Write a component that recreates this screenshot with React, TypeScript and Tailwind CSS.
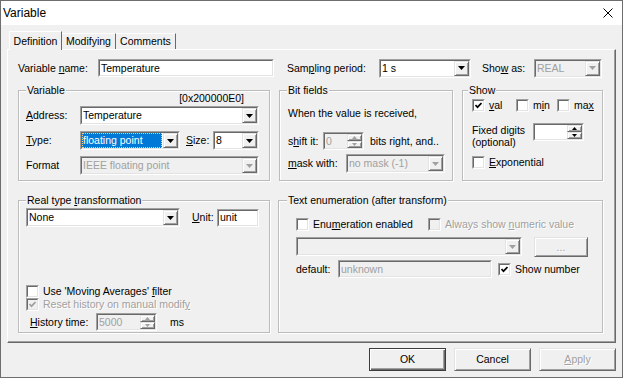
import React from "react";

const font = "font-['Liberation_Sans',Arial,sans-serif]";

// classic 3D edges
const sunkenOuter = "border border-t-[#a0a0a0] border-l-[#a0a0a0] border-r-white border-b-white";
const sunkenInner = "border border-t-[#696969] border-l-[#696969] border-r-[#e3e3e3] border-b-[#e3e3e3]";
const raised =
  "border border-t-[#e3e3e3] border-l-[#e3e3e3] border-r-[#696969] border-b-[#696969] shadow-[inset_1px_1px_0_#fff,inset_-1px_-1px_0_#a0a0a0]";
const grayText = "text-[#a0a0a0] [text-shadow:1px_1px_0_#fff]";

const U = ({ children }: { children: React.ReactNode }) => <span className="underline">{children}</span>;

const Arrow = ({ gray }: { gray?: boolean }) => (
  <svg width="7" height="4" viewBox="0 0 7 4">
    <polygon points="0,0 7,0 3.5,4" fill={gray ? "#a0a0a0" : "#000"} />
  </svg>
);

const SmallArrow = ({ up, gray }: { up?: boolean; gray?: boolean }) => (
  <svg width="5" height="3" viewBox="0 0 5 3">
    <polygon points={up ? "0,3 5,3 2.5,0" : "0,0 5,0 2.5,3"} fill={gray ? "#a0a0a0" : "#000"} />
  </svg>
);

const Combo = ({
  className,
  value,
  disabled,
  selected,
}: {
  className: string;
  value?: string;
  disabled?: boolean;
  selected?: boolean;
}) => (
  <div className={`flex h-[19px] shrink-0 ${sunkenOuter} ${disabled ? "bg-[#f0f0f0]" : "bg-white"} ${className}`}>
    <div className={`flex min-w-0 flex-1 ${sunkenInner}`}>
      <div className="flex min-w-0 flex-1 items-center">
        {selected ? (
          <span className="mr-[1px] flex h-full flex-1 items-center bg-[#0078d7] pl-[1px] text-white outline-1 outline-dotted outline-offset-[-1px] outline-[#ffd27a]">
            {value}
          </span>
        ) : (
          <span className={`pl-[1px] ${disabled ? "text-[#a0a0a0]" : ""}`}>{value}</span>
        )}
      </div>
      <div className={`flex w-[15px] items-center justify-center bg-[#f0f0f0] ${raised}`}>
        <Arrow gray={disabled} />
      </div>
    </div>
  </div>
);

const Input = ({ className, value, disabled }: { className: string; value?: string; disabled?: boolean }) => (
  <div className={`flex h-[18px] shrink-0 ${sunkenOuter} ${disabled ? "bg-[#f0f0f0]" : "bg-white"} ${className}`}>
    <div className={`flex flex-1 items-center pl-[1px] ${sunkenInner} ${disabled ? "text-[#a0a0a0]" : ""}`}>{value}</div>
  </div>
);

const Spin = ({ className, value, disabled }: { className: string; value?: string; disabled?: boolean }) => (
  <div className={`flex h-[18px] shrink-0 ${sunkenOuter} ${disabled ? "bg-[#f0f0f0]" : "bg-white"} ${className}`}>
    <div className={`flex flex-1 ${sunkenInner}`}>
      <span className={`flex flex-1 items-center pl-[1px] ${disabled ? "text-[#a0a0a0]" : ""}`}>{value}</span>
      <div className="flex w-[15px] flex-col">
        <div className={`flex flex-1 items-center justify-center bg-[#f0f0f0] ${raised}`}>
          <SmallArrow up gray={disabled} />
        </div>
        <div className={`flex flex-1 items-center justify-center bg-[#f0f0f0] ${raised}`}>
          <SmallArrow gray={disabled} />
        </div>
      </div>
    </div>
  </div>
);

const Check = ({ checked, disabled }: { checked?: boolean; disabled?: boolean }) => (
  <div className={`flex h-[13px] w-[13px] shrink-0 ${sunkenOuter} ${disabled ? "bg-[#f0f0f0]" : "bg-white"}`}>
    <div className={`flex flex-1 items-center justify-center ${sunkenInner}`}>
      {checked && (
        <svg width="7" height="7" viewBox="0 0 7 7">
          <polyline points="0.5,3 2.5,5.2 6.5,1" fill="none" stroke={disabled ? "#a0a0a0" : "#000"} strokeWidth="1.7" />
        </svg>
      )}
    </div>
  </div>
);

const CheckLabel = ({
  checked,
  disabled,
  className = "",
  children,
}: {
  checked?: boolean;
  disabled?: boolean;
  className?: string;
  children: React.ReactNode;
}) => (
  <div className={`flex shrink-0 items-center ${className}`}>
    <Check checked={checked} disabled={disabled} />
    <span className={`ml-[4px] whitespace-nowrap ${disabled ? grayText : ""}`}>{children}</span>
  </div>
);

const Group = ({
  title,
  className,
  titleClass = "ml-[7px]",
  children,
}: {
  title: React.ReactNode;
  className: string;
  titleClass?: string;
  children: React.ReactNode;
}) => (
  <div className={`flex shrink-0 flex-col border border-[#bcbcbc] shadow-[inset_1px_1px_0_#fff,1px_1px_0_#fff] ${className}`}>
    <span className={`-mt-[7px] w-fit bg-[#f0f0f0] px-[1px] leading-[13px] whitespace-nowrap ${titleClass}`}>{title}</span>
    {children}
  </div>
);

const Button = ({ children, def, disabled }: { children: React.ReactNode; def?: boolean; disabled?: boolean }) => (
  <div
    className={`flex h-[23px] w-[77px] items-center justify-center bg-[#f0f0f0] ${
      def
        ? "border border-[#3c3c3c] shadow-[inset_1px_1px_0_#fff,inset_-1px_-1px_0_#696969,inset_-2px_-2px_0_#a0a0a0]"
        : raised
    } ${disabled ? grayText : ""}`}
  >
    {children}
  </div>
);

export default function App() {
  return (
    <div className={`flex h-[378px] w-[623px] flex-col border border-[#6e6e6e] bg-[#f0f0f0] text-[10.5px] leading-[13px] text-black ${font}`}>
      {/* title bar */}
      <div className="flex h-[24px] shrink-0 items-center justify-between bg-white pl-[2px] pr-[9px] text-[12px]">
        <span>Variable</span>
        <svg width="10" height="10" viewBox="0 0 10 10">
          <path d="M0.5 0.5L9.5 9.5M9.5 0.5L0.5 9.5" stroke="#000" strokeWidth="1" />
        </svg>
      </div>

      <div className="flex flex-1 flex-col pl-[6px] pt-[6px]">
        {/* tabs */}
        <div className="flex h-[18px] items-end pl-[2px]">
          <div className="relative z-10 -mb-[1px] flex h-[19px] w-[53px] items-center justify-center border-t border-l border-r border-t-white border-l-white border-r-[#696969] bg-[#f0f0f0]">
            Definition
          </div>
          <div className="flex h-[16px] w-[54px] items-center justify-center border-t border-r border-t-white border-r-[#696969]">
            Modifying
          </div>
          <div className="flex h-[16px] w-[60px] items-center justify-center border-t border-r border-t-white border-r-[#696969]">
            Comments
          </div>
        </div>

        {/* tab page */}
        <div className="flex h-[294px] w-[609px] flex-col border border-t-white border-l-white border-r-[#696969] border-b-[#696969] shadow-[inset_-1px_-1px_0_#a0a0a0]">
          <div className="mt-[9px] flex h-[18px] items-center pl-[10px]">
            <span className="w-[80px]">
              Variable <U>n</U>ame:
            </span>
            <Input className="w-[176px]" value="Temperature" />
            <span className="ml-[13px] w-[92px]">
              Sam<U>p</U>ling period:
            </span>
            <Combo className="w-[92px]" value="1 s" />
            <span className="ml-[11px] w-[52px]">
              Sho<U>w</U> as:
            </span>
            <Combo className="w-[68px]" value="REAL" disabled />
          </div>

          <div className="mt-[13px] flex pl-[10px]">
            <Group title="Variable" className="h-[91px] w-[252px]">
              <span className="-mt-[5px] mr-[25px] self-end">[0x200000E0]</span>
              <div className="mt-[1px] flex items-center pl-[7px]">
                <span className="w-[54px]">
                  <U>A</U>ddress:
                </span>
                <Combo className="w-[179px]" value="Temperature" />
              </div>
              <div className="mt-[6px] flex items-center pl-[7px]">
                <span className="w-[54px]">
                  <U>T</U>ype:
                </span>
                <Combo className="w-[100px]" value="floating point" selected />
                <span className="ml-[6px] w-[27px]">
                  <U>S</U>ize:
                </span>
                <Combo className="w-[46px]" value="8" />
              </div>
              <div className="mt-[6px] flex items-center pl-[7px]">
                <span className="w-[54px]">Format</span>
                <Combo className="w-[179px]" value="IEEE floating point" disabled />
              </div>
            </Group>

            <Group title="Bit fields" className="ml-[9px] h-[91px] w-[174px]">
              <span className="mt-[10px] pl-[8px]">When the value is received,</span>
              <div className="mt-[12px] flex items-center pl-[8px]">
                <span className="w-[35px]">
                  s<U>h</U>ift it:
                </span>
                <Spin className="w-[41px]" value="0" disabled />
                <span className="ml-[6px] whitespace-nowrap">bits right, and..</span>
              </div>
              <div className="mt-[4px] flex items-center pl-[8px]">
                <span className="w-[58px]">
                  <U>m</U>ask with:
                </span>
                <Combo className="w-[99px]" value="no mask (-1)" disabled />
              </div>
            </Group>

            <Group title="Show" titleClass="ml-[5px]" className="ml-[9px] h-[91px] w-[141px]">
              <div className="mt-[2px] flex items-center pl-[9px]">
                <CheckLabel checked className="w-[44px]">
                  <U>v</U>al
                </CheckLabel>
                <CheckLabel className="w-[41px]">
                  m<U>i</U>n
                </CheckLabel>
                <CheckLabel>
                  ma<U>x</U>
                </CheckLabel>
              </div>
              <div className="mt-[11px] flex items-start pl-[9px]">
                <span className="mt-[1px] w-[61px] leading-[12px]">
                  Fixed digits
                  <br />
                  (optional)
                </span>
                <Spin className="w-[51px]" />
              </div>
              <div className="mt-[8px] flex pl-[9px]">
                <CheckLabel>
                  <U>E</U>xponential
                </CheckLabel>
              </div>
            </Group>
          </div>

          <div className="mt-[19px] flex pl-[10px]">
            <Group
              title={
                <>
                  Real type <U>t</U>ransformation
                </>
              }
              className="h-[133px] w-[252px]"
            >
              <div className="mt-[1px] flex items-center pl-[7px]">
                <Combo className="w-[154px]" value="None" />
                <span className="ml-[12px] w-[25px]">
                  <U>U</U>nit:
                </span>
                <Input className="w-[42px]" value="unit" />
              </div>
              <div className="mt-[58px] flex h-[13px] pl-[7px]">
                <CheckLabel>
                  Use 'Moving Averages' <U>f</U>ilter
                </CheckLabel>
              </div>
              <div className="flex h-[13px] pl-[7px]">
                <CheckLabel checked disabled>
                  Reset history on manual modif<U>y</U>
                </CheckLabel>
              </div>
              <div className="mt-[2px] flex items-center pl-[11px]">
                <span className="w-[66px]">
                  <U>H</U>istory time:
                </span>
                <Spin className="w-[61px]" value="5000" disabled />
                <span className="ml-[13px]">ms</span>
              </div>
            </Group>

            <Group
              title="Text enumeration (after transform)"
              titleClass="ml-[8px]"
              className="ml-[8px] h-[133px] w-[325px]"
            >
              <div className="mt-[11px] flex items-center pl-[17px]">
                <CheckLabel className="w-[132px]">
                  Enu<U>m</U>eration enabled
                </CheckLabel>
                <CheckLabel disabled>
                  Always show <U>n</U>umeric value
                </CheckLabel>
              </div>
              <div className="mt-[6px] flex items-start pl-[17px]">
                <Combo className="w-[226px]" disabled />
                <div className={`ml-[12px] flex h-[20px] w-[54px] items-center justify-center bg-[#f0f0f0] ${raised} ${grayText}`}>
                  ...
                </div>
              </div>
              <div className="mt-[3px] flex items-center pl-[17px]">
                <span className="w-[42px]">default:</span>
                <Input className="w-[154px]" value="unknown" disabled />
                <CheckLabel checked className="ml-[6px]">
                  Show number
                </CheckLabel>
              </div>
            </Group>
          </div>
        </div>

        {/* buttons */}
        <div className="mt-[5px] flex w-[609px] justify-end gap-[8px]">
          <Button def>OK</Button>
          <Button>Cancel</Button>
          <Button disabled>
            <U>A</U>pply
          </Button>
        </div>
      </div>
    </div>
  );
}
